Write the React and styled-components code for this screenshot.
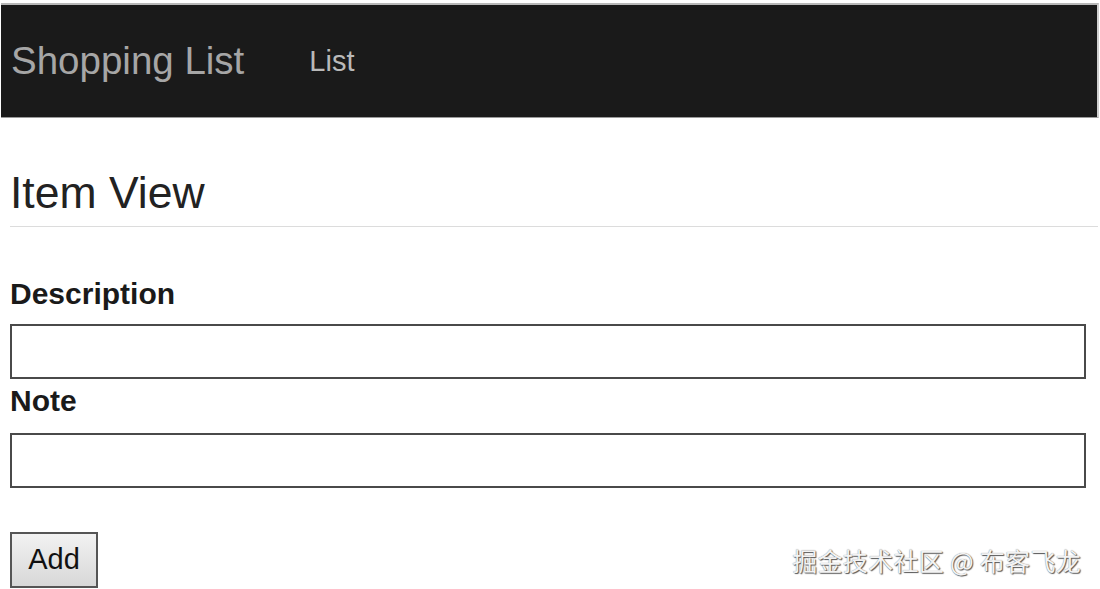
import React from 'react'
import styled, { createGlobalStyle } from 'styled-components';

const GlobalStyle = createGlobalStyle`
    html, body {
        margin: 0;
        padding: 0;
        background: #fff;
        font-family: "Liberation Sans", Arial, sans-serif;
    }
    body {
        padding-top: 3px;
    }
`

const Page = styled.div`
    position: relative;
    width: 1100px;
    height: 586px;
    overflow: hidden;
`

const NavBar = styled.nav`
    display: flex;
    align-items: center;
    height: 115px;
    margin: 0 1px 0 1px;
    padding-left: 10px;
    box-sizing: border-box;
    background: #1a1a1a;
    border-top: 2px solid #b8b8b8;
    border-right: 2px solid #cfcfcf;
    border-bottom: 1px solid #9a9a9a;
`

const Brand = styled.span`
    font-size: 38.5px;
    line-height: 1;
    color: #a6a6a6;
    margin-right: 65px;
`

const NavLink = styled.span`
    font-size: 29px;
    line-height: 1;
    color: #b9b9b9;
`

const Content = styled.div`
    padding: 0 2px 0 10px;
`

const Title = styled.h1`
    margin: 53px 0 0 0;
    padding-bottom: 10px;
    font-size: 44.5px;
    line-height: 1;
    font-weight: normal;
    color: #222;
    border-bottom: 1px solid #dcdcdc;
`

const Form = styled.form`
    display: flex;
    flex-direction: column;
    margin-top: 52px;
`

const Label = styled.label`
    display: block;
    font-size: 30px;
    line-height: 1;
    font-weight: bold;
    color: #1a1a1a;
    margin-top: ${props => props.first ? '0' : '7px'};
    margin-bottom: ${props => props.first ? '15px' : '17px'};
`

const Input = styled.input`
    display: block;
    width: 1076px;
    height: 55px;
    box-sizing: border-box;
    border: 2px solid #4a4a4a;
    background: #fff;
    outline: none;
`

const Button = styled.button`
    align-self: flex-start;
    margin-top: 44px;
    width: 88px;
    height: 56px;
    box-sizing: border-box;
    border: 2px solid #555;
    background: linear-gradient(#f2f2f2, #d8d8d8);
    font-family: "Liberation Sans", Arial, sans-serif;
    font-size: 29px;
    color: #111;
    padding: 0;
`

const Watermark = styled.div`
    position: absolute;
    right: 19px;
    bottom: 16px;
    font-family: "Noto Sans CJK SC", sans-serif;
    font-size: 25px;
    line-height: 1;
    letter-spacing: 0.3px;
    color: #f3f3f3;
    text-shadow: 1px 1px 1px #555, 0 0 1px #777;
`

export default function App() {
    return (
        <Page>
            <GlobalStyle />
            <NavBar>
                <Brand>Shopping List</Brand>
                <NavLink>List</NavLink>
            </NavBar>
            <Content>
                <Title>Item View</Title>
                <Form onSubmit={e => e.preventDefault()}>
                    <Label first>Description</Label>
                    <Input type="text" />
                    <Label>Note</Label>
                    <Input type="text" />
                    <Button type="submit">Add</Button>
                </Form>
            </Content>
            <Watermark>掘金技术社区 @ 布客飞龙</Watermark>
        </Page>
    );
}
